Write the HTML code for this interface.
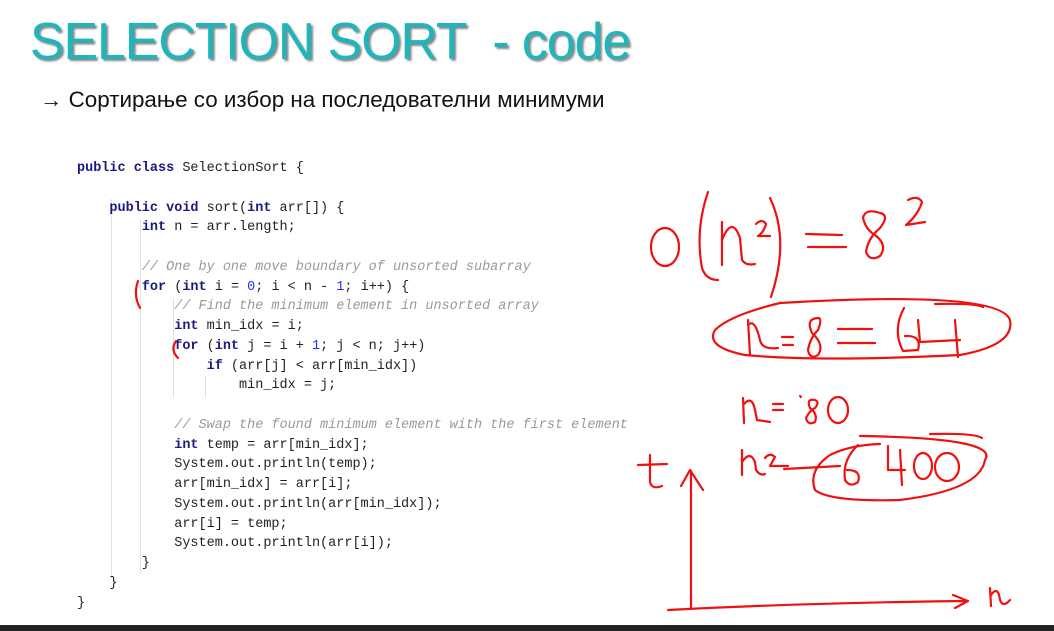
<!DOCTYPE html>
<html><head><meta charset="utf-8"><style>
html,body{margin:0;padding:0;background:#fff;width:1054px;height:631px;overflow:hidden;position:relative}
.title{position:absolute;left:30px;top:12px;font-family:"Liberation Sans",sans-serif;font-size:52px;color:#1fb5bb;letter-spacing:-1px;text-shadow:2px 2px 2px #888;white-space:pre;transform-origin:0 0;transform:scaleX(0.995)}
.sub{position:absolute;left:40px;top:87px;font-family:"Liberation Sans",sans-serif;font-size:22px;color:#111;white-space:pre;transform-origin:0 0;transform:scaleX(1.018)}
pre{position:absolute;left:77px;top:159px;margin:0;font-family:"Liberation Mono",monospace;font-size:13.5px;line-height:19.75px;color:#222}
.k{color:#1a1a80;font-weight:bold}
.c{color:#999;font-style:italic}
.n{color:#2030ff}
.g{position:absolute;width:1px;background:#e2e2e2}
.bar{position:absolute;left:0;top:625px;width:1054px;height:6px;background:#222}
</style></head><body>
<div class="title">SELECTION SORT  - code</div>
<div class="sub">→ Сортирање со избор на последователни минимуми</div>
<div class="g" style="left:111px;top:199px;height:380px"></div>
<div class="g" style="left:140px;top:219px;height:355px"></div>
<div class="g" style="left:173px;top:298px;height:100px"></div>
<div class="g" style="left:205px;top:376px;height:22px"></div>
<pre><span class="k">public class</span> SelectionSort {

    <span class="k">public void</span> sort(<span class="k">int</span> arr[]) {
        <span class="k">int</span> n = arr.length;

        <span class="c">// One by one move boundary of unsorted subarray</span>
        <span class="k">for</span> (<span class="k">int</span> i = <span class="n">0</span>; i &lt; n - <span class="n">1</span>; i++) {
            <span class="c">// Find the minimum element in unsorted array</span>
            <span class="k">int</span> min_idx = i;
            <span class="k">for</span> (<span class="k">int</span> j = i + <span class="n">1</span>; j &lt; n; j++)
                <span class="k">if</span> (arr[j] &lt; arr[min_idx])
                    min_idx = j;

            <span class="c">// Swap the found minimum element with the first element</span>
            <span class="k">int</span> temp = arr[min_idx];
            System.out.println(temp);
            arr[min_idx] = arr[i];
            System.out.println(arr[min_idx]);
            arr[i] = temp;
            System.out.println(arr[i]);
        }
    }
}</pre>
<svg width="1054" height="631" style="position:absolute;left:0;top:0" fill="none" stroke="#f01010" stroke-width="2.2" stroke-linecap="round" stroke-linejoin="round">
<path d="M138 281 Q133 295 140 308"/>
<path d="M176 341 Q170 350 178 358"/>
<ellipse cx="665" cy="247" rx="14" ry="19"/>
<path d="M708 192 Q695 230 702 268 Q706 280 718 280"/>
<path d="M722 222 L722 265 M722 240 Q732 215 740 238 L742 260 Q746 266 755 264"/>
<path d="M756 224 Q762 218 766 224 Q764 232 758 236 L770 236"/>
<path d="M770 198 Q790 240 771 297"/>
<path d="M806 234 L842 235 M808 247 L846 247"/>
<path d="M880 213 Q865 208 863 218 Q866 230 875 235 Q888 245 880 256 Q870 262 866 252 Q868 238 880 228 Q890 215 880 213"/>
<path d="M908 200 Q918 195 922 202 Q918 215 906 225 L925 222"/>
<path d="M780 303 Q1000 290 1010 320 Q1015 345 960 355 Q820 362 745 355 Q705 347 715 330 Q730 315 780 303"/>
<path d="M935 304 Q975 303 983 307"/>
<path d="M748 320 L750 355 M748 325 Q755 318 760 340 Q762 350 778 348"/>
<path d="M782 337 L793 337 M783 345 L793 345"/>
<path d="M819 318 Q805 318 812 333 Q825 345 818 355 Q810 360 808 350 Q810 338 818 330 Q822 320 819 318"/>
<path d="M838 329 L872 329 M838 343 L875 343"/>
<path d="M904 308 Q892 330 903 351 L918 350 Q922 335 905 336"/>
<path d="M918 320 L920 342 L960 340 M955 320 L958 357"/>
<path d="M743 398 L744 423 M744 404 Q752 395 755 410 L757 420 L770 422"/>
<path d="M773 404 L783 404 M773 410 L783 410"/>
<path d="M800 396 L801 397"/>
<path d="M815 400 Q806 398 810 408 Q818 414 815 422 Q808 426 806 418 Q810 410 815 408 Q820 402 815 400"/>
<ellipse cx="838" cy="410" rx="10" ry="13"/>
<path d="M742 450 L742 475 M742 462 Q750 450 755 462 L756 470 Q760 476 765 474"/>
<path d="M765 458 Q770 452 775 457 L770 466 L788 466"/>
<path d="M784 469 L840 466"/>
<path d="M860 436 Q1000 438 985 460 Q980 490 900 500 Q830 502 815 490 Q808 470 830 455 Q850 445 880 444"/>
<path d="M930 434 Q975 433 982 438"/>
<path d="M858 445 Q842 460 845 480 Q850 488 858 482 Q862 470 847 470"/>
<path d="M888 446 L888 470 L905 470 M900 450 L902 485"/>
<ellipse cx="923" cy="466" rx="9" ry="13"/>
<ellipse cx="947" cy="467" rx="12" ry="14"/>
<path d="M650 455 L650 482 Q652 490 662 486 M638 465 L667 464"/>
<path d="M691 607 L691 471 M681 486 L690 470 L703 490"/>
<path d="M668 610 Q800 603 965 601 M953 595 L968 601 L955 608"/>
<path d="M990 588 L991 606 M991 595 Q998 585 1000 600 Q1003 608 1010 600"/>
</svg>
<div class="bar"></div>
</body></html>
